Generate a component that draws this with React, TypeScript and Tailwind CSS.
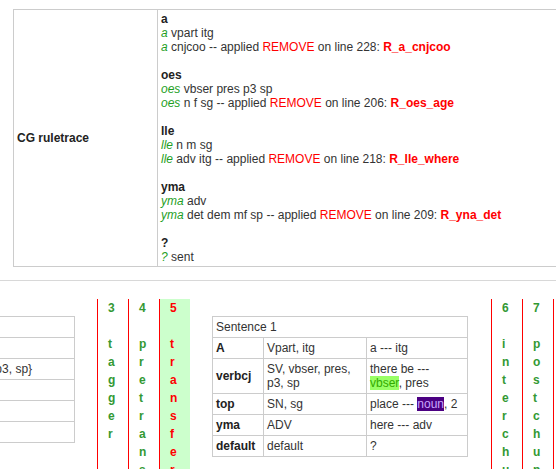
import React from "react";

type Trace = { word: string; readings: { tags: string; rule?: { line: number; name: string } }[] };

const traces: Trace[] = [
  { word: "a", readings: [{ tags: "vpart itg" }, { tags: "cnjcoo", rule: { line: 228, name: "R_a_cnjcoo" } }] },
  { word: "oes", readings: [{ tags: "vbser pres p3 sp" }, { tags: "n f sg", rule: { line: 206, name: "R_oes_age" } }] },
  { word: "lle", readings: [{ tags: "n m sg" }, { tags: "adv itg", rule: { line: 218, name: "R_lle_where" } }] },
  { word: "yma", readings: [{ tags: "adv" }, { tags: "det dem mf sp", rule: { line: 209, name: "R_yna_det" } }] },
  { word: "?", readings: [{ tags: "sent" }] },
];

// vertical stage columns: number, blank line, then one letter per line
function Stage({ n, name, active }: { n: number; name: string; active?: boolean }) {
  return (
    <div
      className={
        "w-[31px] shrink-0 border-l border-[#ff0000] pl-[10px] text-[12px] font-bold leading-[18px] " +
        (active ? "bg-[#ccffcc] text-[#ff0000]" : "text-[#339933]")
      }
    >
      <div>{n}</div>
      <div>&nbsp;</div>
      {name.split("").map((c, i) => (
        <div key={i}>{c}</div>
      ))}
    </div>
  );
}

export default function App() {
  return (
    <div className="w-[556px] h-[469px] overflow-hidden bg-white font-['Liberation_Sans',Arial,sans-serif] text-[12px] leading-[14px] text-[#333]">
      {/* CG ruletrace */}
      <div className="pt-[9px] pl-[13px]">
        <table className="w-[800px] border-collapse border border-[#cccccc]">
          <tbody>
            <tr>
              <td className="w-[144px] border border-[#cccccc] px-[3px] align-middle font-bold text-[#222]">
                CG ruletrace
              </td>
              <td className="border border-[#cccccc] px-[3px] py-[2px] align-top">
                {traces.map((t, i) => (
                  <div key={t.word}>
                    {i > 0 && <div>&nbsp;</div>}
                    <div className="font-bold text-[#222]">{t.word}</div>
                    {t.readings.map((r, j) => (
                      <div key={j}>
                        <i className="text-[#1f9f1f]">{t.word}</i> {r.tags}
                        {r.rule && (
                          <>
                            {" "}-- applied <span className="text-[#ff0000]">REMOVE</span> on line {r.rule.line}:{" "}
                            <b className="text-[#ff0000]">{r.rule.name}</b>
                          </>
                        )}
                      </div>
                    ))}
                  </div>
                ))}
              </td>
            </tr>
          </tbody>
        </table>
      </div>

      {/* pipeline */}
      <div className="mt-[13px] border-t border-[#d8d8d8] pt-[18px]">
        <div className="flex items-start">
          <table className="-ml-[78px] mt-[17px] w-[153px] shrink-0 border-collapse">
            <tbody>
              {["", "", "{vbser, pres, p3, sp}", "", "", ""].map((v, i) => (
                <tr key={i} className="h-[21px]">
                  <td className="border border-[#cccccc] px-[3px] py-[3px] whitespace-nowrap">{v || "\u00a0"}</td>
                </tr>
              ))}
            </tbody>
          </table>
          <div className="ml-[22px] flex">
            <Stage n={3} name="tagger" />
            <Stage n={4} name="pretransfer" />
            <Stage n={5} name="transfer" active />
          </div>
          <table className="ml-[22px] mt-[17px] w-[256px] shrink-0 border-collapse">
            <tbody>
              <tr>
                <td colSpan={3} className="border border-[#cccccc] px-[3px] py-[3px]">
                  Sentence 1
                </td>
              </tr>
              {[
                ["A", "Vpart, itg", <>a --- itg</>],
                ["verbcj", "SV, vbser, pres, p3, sp", <>there be --- <span className="bg-[#99ff66] text-[#33aa00]">vbser</span>, pres</>],
                ["top", "SN, sg", <>place --- <span className="bg-[#4b0082] text-[#c9a6ff]">noun</span>, 2</>],
                ["yma", "ADV", <>here --- adv</>],
                ["default", "default", <>?</>],
              ].map(([a, b, c], i) => (
                <tr key={i}>
                  <td className="w-[51px] border border-[#cccccc] px-[3px] py-[3px] font-bold text-[#222]">{a}</td>
                  <td className="w-[103px] border border-[#cccccc] px-[3px] py-[3px]">{b}</td>
                  <td className="border border-[#cccccc] px-[3px] py-[3px]">{c}</td>
                </tr>
              ))}
            </tbody>
          </table>
          <div className="ml-[23px] flex">
            <Stage n={6} name="interchunk" />
            <Stage n={7} name="postchunk" />
            <Stage n={8} name="" />
          </div>
        </div>
      </div>
    </div>
  );
}
